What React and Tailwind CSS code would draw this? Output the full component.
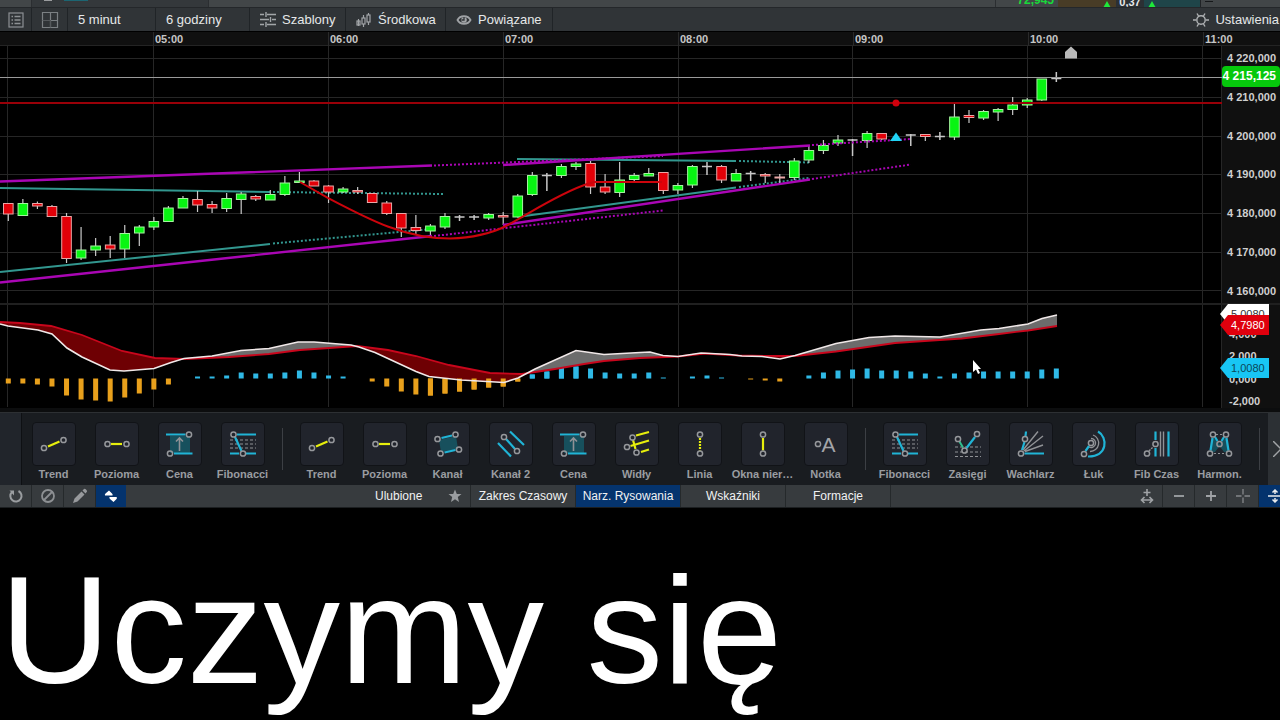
import React from "react";

const STEP = 14.556;
const FIRST = 8.3;
const xAt = (i) => FIRST + STEP * i;

// [kind, body top, body bottom, high, low]; kinds: g = up, r = down, d = doji
const candles = [
  ["r", 203.5, 214, 203, 221], ["g", 203.5, 215.5, 199, 216], ["r", 203.5, 206, 201.5, 209],
  ["r", 206.5, 216.5, 205, 217], ["r", 216.5, 258.5, 213, 263], ["g", 250, 258, 227, 260],
  ["g", 246, 250, 238, 256], ["r", 245, 249, 236, 258], ["g", 233.5, 249, 225, 258],
  ["g", 227, 233, 225, 246], ["g", 221.5, 227, 217, 230], ["g", 208, 221.5, 206, 222],
  ["g", 198.5, 208, 196, 208], ["r", 199.5, 205, 191, 212], ["r", 204.5, 208, 201, 213],
  ["g", 198.5, 208.5, 193, 212], ["g", 194, 199.5, 192, 214], ["r", 196.5, 199, 195, 201],
  ["g", 194.5, 200, 190, 200], ["g", 183, 194.5, 176, 196], ["g", 181, 182.5, 172, 183],
  ["r", 181, 186, 180, 186], ["r", 186, 192, 185, 203], ["g", 189, 192, 187, 193],
  ["r", 190.5, 192, 187, 194], ["r", 193.5, 202.5, 193, 203], ["r", 203, 213.5, 201, 215],
  ["r", 213.5, 228, 213, 237], ["r", 227.5, 230.5, 215, 235], ["g", 226, 231, 224, 236],
  ["g", 216.5, 227, 213, 229], ["d", 217, 217, 215, 221], ["d", 217, 217, 215, 220],
  ["g", 214.5, 218, 213, 220], ["r", 215.5, 217, 212, 225], ["g", 196, 217, 194, 217],
  ["g", 175.5, 194.5, 172, 196], ["d", 175.5, 175.5, 173, 191], ["g", 166.5, 175.5, 164, 178],
  ["g", 164, 166.5, 162, 170], ["r", 163.5, 187, 161, 194], ["r", 187, 192, 174, 194],
  ["g", 180, 192.5, 162, 197], ["g", 175.5, 179.5, 173, 182], ["g", 173.5, 176, 168, 176],
  ["r", 172.5, 190.5, 172, 194], ["g", 185.5, 190, 183, 194], ["g", 166.5, 185, 165, 188],
  ["d", 166.5, 166.5, 162, 175], ["r", 166.5, 180, 165, 183], ["g", 173.5, 181, 169, 181],
  ["d", 173.5, 173.5, 171, 181], ["r", 174.5, 176, 173, 183], ["r", 177, 178, 174, 183],
  ["g", 161, 177.5, 158, 180], ["g", 150.5, 160, 146, 163], ["g", 145.5, 150.5, 140, 154],
  ["g", 140, 143, 135, 146], ["d", 140, 140, 139, 156], ["g", 133.5, 140.5, 131, 148],
  ["r", 133.5, 139, 133, 140], null, ["d", 135, 135, 134, 146],
  ["r", 134.5, 136.5, 134, 141], ["d", 136.5, 136.5, 132, 140], ["g", 117, 137, 104, 140],
  ["r", 115.5, 117.5, 110, 123], ["g", 111.5, 118, 110, 120], ["g", 109.5, 112, 108, 121],
  ["g", 105, 109.5, 97, 115], ["g", 100, 105, 98, 108], ["g", 79, 100, 79, 101],
  ["d", 78.5, 78.5, 72, 82],
];

const histogram = [
  -5, -5, -6, -8, -17, -21, -22, -23, -19, -15, -11, -6, 0, 2, 2, 3, 6, 5, 5, 6, 8, 6, 3, 2, 0,
  -3, -8, -13, -16, -17, -15, -13, -11, -9, -8, -3, 4, 7, 11, 12, 10, 6, 5, 5, 6, 1, 0, 2, 3, 1,
  0, -1, -2, -3, 0, 3, 6, 8, 9, 10, 8, 8, 7, 5, 2, 5, 6, 7, 7, 7, 7, 9, 10,
];

const signal =
  "0,322 20,323 51,326 82,335 122,351 155,358 184,359 229,357 269,354 300,350 329,348 357,346 388,350 416,356 449,365 490,373 522,374 555,369 584,364 604,361 640,358 678,356.5 705,353.5 738,355.5 779,356 795,356 836,351.5 895,343 962,338.5 999,334 1028,330.5 1057,326";
const macd =
  "0,324 8,326 38,330 52,334 67,348 82,357 110,370 124,371 154,368.5 171,362.5 184,358.5 212,356 241,350.5 269,348.5 298,342 314,342 351,345 359,347 375,352.5 416,371.5 429,376.5 461,380 504,382.5 518,378 535,369 576,350.5 604,354.5 640,352.5 650,352 663,355.5 678,356.5 701,353 730,354.5 742,356 762,356.5 780,359 795,355.5 836,343.5 869,337.5 895,336 940,337 981,330 999,328.5 1028,324 1042,318.5 1057,315";
const reversed = (pts) => pts.split(" ").reverse().join(" ");

function Candle({ data, x }) {
  if (!data) return null;
  const [kind, top, bottom, high, low] = data;
  if (kind === "d")
    return (
      <path d={`M${x} ${high}V${low}M${x - 5} ${top}H${x + 5}`} stroke="#c8c8c8" strokeWidth="1.5" fill="none" />
    );
  return (
    <g>
      <path d={`M${x} ${high}V${low}`} stroke="#c9c9c9" strokeWidth="1.2" />
      <rect
        x={x - 4.8}
        y={top}
        width="9.6"
        height={bottom - top}
        fill={kind === "g" ? "#08f512" : "#e20008"}
        stroke={kind === "g" ? "#a5f2a0" : "#e8a6a6"}
        strokeWidth="1"
      />
    </g>
  );
}

function Chart() {
  return (
    <svg viewBox="0 46 1222 362" className="block h-auto w-full" role="img" aria-label="Wykres">
      <defs>
        <clipPath id="below"><polygon points={`${signal} 1057,408 0,408`} /></clipPath>
        <clipPath id="above"><polygon points={`${signal} 1057,300 0,300`} /></clipPath>
      </defs>
      <rect y="46" width="1222" height="362" fill="#000" />
      <g stroke="#262626" strokeWidth="1">
        {[7.5, 153.5, 328.5, 503.5, 678.5, 852.5, 1027.5, 1202.5].map((x) => (
          <path key={x} d={`M${x} 46V407`} />
        ))}
        {[58.5, 97.5, 136.5, 174.5, 213.5, 252.5, 290.5].map((y) => (
          <path key={y} d={`M0 ${y}H1222`} />
        ))}
        <path d="M1221.5 46V408" />
      </g>
      <path d="M0 304H1222" stroke="#202020" strokeWidth="2" />

      <g fill="none" stroke="#32978f" strokeWidth="2">
        <path d="M0 188L270 192M0 272L270 244M517 159L736 161M517 217L736 187.5" />
        <path d="M273 192L443 194M273 243.5L432 229M739 161L809 162.5M739 187L809 178" strokeDasharray="2 2" />
      </g>
      {candles.map((c, i) => (
        <Candle key={i} data={c} x={xAt(i)} />
      ))}
      <g fill="none" stroke="#a906b4" strokeWidth="2.4">
        <path d="M0 181.500L432 165.500M0 282.500L432 236M503 165L810 145.500M503 225L810 179.500" />
        <path d="M434 165.500L663 156M434 236L663 210.500M812 145L911 139M812 179L911 164.500" strokeWidth="2" strokeDasharray="2 2" />
      </g>
      <path
        d="M300 182L330 199C370 220 405 238.500 450 238.500C480 237.500 495 231.500 505 226.500C530 213 560 193 587 184L594 182H662"
        fill="none"
        stroke="#cc040c"
        strokeWidth="2"
      />
      <path d="M0 103H1222" stroke="#990008" strokeWidth="2" />
      <circle cx="896" cy="103" r="3.500" fill="#d0000c" />
      <path d="M0 77.500H1222" stroke="#9a9a9a" strokeWidth="1.200" />
      <path d="M890 141L896 132.500L902 141Z" fill="#21d3f5" />
      <path d="M1065 58.500V52L1071 46.500L1077 52V58.500Z" fill="#b9b9b9" />

      {histogram.map((v, i) =>
        v === 0 ? null : (
          <rect
            key={i}
            x={xAt(i) - 2.5}
            y={v > 0 ? 378.5 - v : 378.5}
            width="5"
            height={Math.abs(v)}
            fill={v > 0 ? "#2fb9e6" : "#e8a01c"}
          />
        )
      )}
      <polygon points={`${macd} ${reversed(signal)}`} fill="#6e0003" clipPath="url(#below)" />
      <polygon points={`${macd} ${reversed(signal)}`} fill="#6c6c6c" clipPath="url(#above)" />
      <g fill="#2fb9e6">
        {[36, 37, 38, 39].map((i) => (
          <rect key={i} x={xAt(i) - 2.5} y={378.5 - histogram[i]} width="5" height={histogram[i]} />
        ))}
      </g>
      <g fill="#e8a01c">
        {[29, 30, 31, 32, 33, 34, 35].map((i) => (
          <rect key={i} x={xAt(i) - 2.5} y="378.500" width="5" height={-histogram[i]} />
        ))}
      </g>
      <polyline points={signal} fill="none" stroke="#c8061c" strokeWidth="1.800" />
      <polyline points={macd} fill="none" stroke="#f0e8e8" strokeWidth="1.600" />
      <path d="M973 360V372L976 369.500L978 374L980 373L978 369H981Z" fill="#fff" />
    </svg>
  );
}

const C = ({ x, y }) => <circle cx={x} cy={y} r="2.600" stroke="#96989c" strokeWidth="1.500" fill="none" />;
const Cyan = ({ d }) => <path d={d} stroke="#20b4d6" strokeWidth="2.200" fill="none" />;
const Yel = ({ d, dash }) => <path d={d} stroke="#e6ee0c" strokeWidth="2.200" fill="none" strokeDasharray={dash} />;
const Gray = ({ d, dash, w = 1 }) => <path d={d} stroke="#909296" strokeWidth={w} fill="none" strokeDasharray={dash} />;

const drawings = {
  trend: (<><Yel d="M-6 2.500L5.500 -2.500" /><C x={-10} y={4} /><C x={9.5} y={-4} /></>),
  level: (<><Yel d="M-6 0H5" /><C x={-9.5} y={0} /><C x={9.5} y={0} /></>),
  price: (
    <>
      <rect x="-10" y="-8" width="20" height="17" fill="#17505d" />
      <Cyan d="M-14 -9.500H5.500M-6 9.500H12.500" />
      <C x={9} y={-9.5} /><C x={-10} y={9.5} />
      <Gray w={1.6} d="M-.5 7V-6M-4 -2.500L-.5 -6L3 -2.500" />
    </>
  ),
  fib: (
    <>
      <Gray d="M-13 -4H13M-13 0H13M-13 4H13" dash="3 2" />
      <Cyan d="M-6 -9.500H13M-8 -7L-1.500 7M-13 9.500H-4M3 9.500H13" />
      <C x={-9.5} y={-9.5} /><C x={0} y={9.5} />
    </>
  ),
  channel: (
    <>
      <path d="M-9 -4L8 -8L10 5L-7 8Z" fill="#17505d" />
      <Cyan d="M-6.500 -6L4 -8.500M-3.500 8.500L7.500 6" />
      <C x={-10.5} y={-5} /><C x={7.5} y={-9.5} /><C x={-7.5} y={9.5} /><C x={11} y={5.5} />
    </>
  ),
  channel2: (
    <>
      <Cyan d="M-13 -1L0 12.500M-1 -12.500L13 1M-5 -5L4 5" />
      <C x={-7} y={-7} /><C x={6} y={7} />
    </>
  ),
  fork: (
    <>
      <Yel d="M-1 -8.500L12 -12M-6.500 2L12 -3.500M4 8L12 5.500M-4 -4L-1.500 5" />
      <C x={-4.5} y={-6.5} /><C x={-10} y={3} /><C x={-0.5} y={8.5} />
    </>
  ),
  line: (<><Yel d="M0 -6V6.500" dash="2 1" /><C x={0} y={-9.5} /><C x={0} y={9.5} /></>),
  window: (<><Yel d="M0 -6V6.500" /><C x={0} y={-9.5} /><C x={0} y={9.5} /></>),
  note: (
    <>
      <C x={-8} y={0} />
      <text x="2.500" y="8" textAnchor="middle" fontSize="21" fill="#a3a5a9" fontFamily="Liberation Sans, Arial, sans-serif">A</text>
    </>
  ),
  ranges: (
    <>
      <Gray d="M-13 3H13M-13 8H13M-13 12.500H13" dash="3 2" />
      <Cyan d="M-1.500 4L7 -7" />
      <path d="M-8.500 -2.500L-5 3.500" stroke="#2fbf8f" strokeWidth="2" />
      <C x={-10} y={-5} /><C x={9} y={-10} /><C x={-3.5} y={6.5} />
    </>
  ),
  fan: (
    <>
      <Gray w={1.4} d="M-8 6L7 -12.500M-7 7L12 -8M-6 7.500L12 1" />
      <Cyan d="M-5 -12.500L-5.500 -8M-6.500 -2L-9 6M-6.500 9.500H13" />
      <C x={-6} y={-5} /><C x={-10} y={9.5} />
    </>
  ),
  arc: (
    <>
      <Gray w={1.3} d="M-3 -5.500A4.500 4.500 0 1 1 -5 3M-1 -9A8.500 8.500 0 0 1 -4 7.500" />
      <Cyan d="M4 -12.500C14 -7 14 13 -6 12.500M-5 2L-8.500 7" />
      <C x={-3} y={-1} /><C x={-10} y={10} />
    </>
  ),
  fibtime: (
    <>
      <Gray w={1.4} d="M3.500 -12.500V12.500M6.500 -12.500V12.500" />
      <Cyan d="M-1.500 -12.500V-4M-1.500 4V12.500M11.500 -12.500V12.500" />
      <Gray w={1.4} d="M-8 7L-4 3" dash="2 1" />
      <C x={-1.5} y={0} /><C x={-10} y={9.5} />
    </>
  ),
  harmonic: (
    <>
      <path d="M-7 -7L-.5 0L6 -7L9 8H4L-.5 2L-5 8H-10Z" fill="#17505d" />
      <Gray d="M-4 -9.500H3M-6 9.500H6" dash="2 2" />
      <Cyan d="M-7.500 -6L-9.500 6.500M6.500 -6L8.500 6.500M-5 -7L-2.500 -3M4 -7L1.500 -3" />
      <C x={-7} y={-9.5} /><C x={6} y={-9.5} /><C x={-0.5} y={0} /><C x={-10} y={9.5} /><C x={9} y={9.5} />
    </>
  ),
};

const toolGroups = [
  [["trend", "Trend"], ["level", "Pozioma"], ["price", "Cena"], ["fib", "Fibonacci"]],
  [
    ["trend", "Trend"], ["level", "Pozioma"], ["channel", "Kanał"], ["channel2", "Kanał 2"], ["price", "Cena"],
    ["fork", "Widły"], ["line", "Linia"], ["window", "Okna nier…"], ["note", "Notka"],
  ],
  [
    ["fib", "Fibonacci"], ["ranges", "Zasięgi"], ["fan", "Wachlarz"], ["arc", "Łuk"], ["fibtime", "Fib Czas"],
    ["harmonic", "Harmon."],
  ],
];

function Tool({ icon, label }) {
  return (
    <button className="flex w-[63px] shrink-0 flex-col items-center gap-[2px] whitespace-nowrap">
      <span className="flex h-11 w-11 items-center justify-center rounded border border-[#111317] bg-[#21242c]">
        <svg viewBox="-15 -15 30 30" className="h-[30px] w-[30px]">{drawings[icon]}</svg>
      </span>
      <span className="text-[11px] leading-3 font-bold text-[#9a9ca1]">{label}</span>
    </button>
  );
}

function TopStrip() {
  return (
    <div className="flex h-2 items-start overflow-hidden border-b border-[#24272a] bg-[#424648]">
      <div className="h-2 w-8 shrink-0 border-r border-[#2b2e31]" />
      <div className="flex h-2 w-44 shrink-0 gap-3 bg-[#34383b] pl-3">
        <span className="h-px w-2 bg-[#9a9c9e]" />
        <span className="h-px w-6 bg-[#1c6572]" />
      </div>
      <div className="h-2 flex-1 border-l border-[#2b2e31]" />
      <div className="flex h-2 shrink-0 items-end border-l border-[#2b2e31] text-[12px] leading-3 font-bold">
        <span className="w-[62px] pr-1 pb-[2px] text-right text-[#19d83a]">72,945</span>
        <span className="flex h-2 w-[58px] items-center justify-end bg-[#483c26] pr-[5px]">
          <svg viewBox="0 0 8 7" className="h-[7px] w-2"><path d="M4 0L8 7H0Z" fill="#1ee83a" /></svg>
        </span>
        <span className="h-2 w-7 bg-[#2b3034] text-center text-[11px] leading-1 text-[#e6e8ea]">0,37</span>
        <span className="flex h-2 w-14 items-center bg-[#1f4549] pl-1">
          <svg viewBox="0 0 8 7" className="h-[7px] w-2"><path d="M4 0L8 7H0Z" fill="#1ee83a" /></svg>
        </span>
      </div>
      <div className="h-2 w-20 shrink-0 border-l border-[#202326] pt-px pl-1"><div className="h-px w-2 bg-[#16181a]" /></div>
    </div>
  );
}

const ListIcon = () => (
  <svg viewBox="0 0 16 16" className="h-4 w-4" fill="none" stroke="#8d9194" strokeWidth="1.200">
    <rect x="1" y="1" width="14" height="14" />
    <path d="M3.500 4.500H5M3.500 8H5M3.500 11.500H5M6.500 4.500H12.500M6.500 8H12.500M6.500 11.500H12.500" strokeWidth="1.500" />
  </svg>
);
const GridIcon = () => (
  <svg viewBox="0 0 18 18" className="h-[18px] w-[18px]" fill="none" stroke="#7b8083" strokeWidth="1.200">
    <path d="M1.500 1.500H16.500V16.500H1.500ZM9.500 1.500V16.500M1.500 9.500H16.500" />
    <path d="M1.500 9.500H9.500V16.500" stroke="#55595c" />
  </svg>
);
const SlidersIcon = () => (
  <svg viewBox="0 0 16 16" className="h-4 w-4" fill="none" stroke="#a2a6a9" strokeWidth="1.400">
    <path d="M0 2.500H4M7 2.500H16M0 7.500H9M12 7.500H16M0 12.500H4M7 12.500H16M6 0V5M10.500 5V10M6 10V15" />
  </svg>
);
const CandlesIcon = () => (
  <svg viewBox="0 0 16 16" className="h-4 w-4" fill="none" stroke="#a2a6a9" strokeWidth="1.200">
    <path d="M2.500 7V14M7.500 3V15M12.500 1V13" />
    <rect x="1" y="9" width="3" height="4" /><rect x="6" y="6" width="3" height="6" fill="#303437" /><rect x="11" y="3" width="3" height="7" fill="#303437" />
  </svg>
);
const EyeIcon = () => (
  <svg viewBox="0 0 16 12" className="h-3 w-4">
    <path d="M1.500 6C4 1 12 1 14.500 6C12 11 4 11 1.500 6Z" fill="none" stroke="#a0a3a6" strokeWidth="1.800" />
    <circle cx="8" cy="6" r="2.800" fill="#a0a3a6" /><path d="M8 3V6H5.500" stroke="#303437" strokeWidth="1.300" fill="none" />
  </svg>
);
const SunIcon = () => (
  <svg viewBox="0 0 16 16" className="h-4 w-4" fill="none" stroke="#b0b3b5" strokeWidth="1.400">
    <circle cx="8" cy="8" r="4.200" />
    <path d="M0 8H3M13 8H16M4 1.500L5.500 4M12 1.500L10.500 4M4 14.500L5.500 12M12 14.500L10.500 12" />
  </svg>
);

const sep = "border-r border-[#202427]";

function Toolbar() {
  return (
    <div className="flex h-6 items-stretch border-b border-black bg-[#303437] text-[13px] leading-4 text-[#e6e8e9]">
      <button aria-label="Lista" className={`flex w-8 items-center justify-center ${sep}`}><ListIcon /></button>
      <button aria-label="Układ" className={`flex w-9 items-center justify-center ${sep}`}><GridIcon /></button>
      <button className={`w-[88px] pl-[10px] text-left ${sep}`}>5 minut</button>
      <button className={`w-[94px] pl-[10px] text-left ${sep}`}>6 godziny</button>
      <button className={`flex w-24 items-center gap-[6px] pl-[10px] ${sep}`}><SlidersIcon />Szablony</button>
      <button className={`flex w-[100px] items-center gap-[6px] pl-[10px] ${sep}`}><CandlesIcon />Środkowa</button>
      <button className={`flex w-[107px] items-center gap-[6px] pl-[10px] ${sep}`}><EyeIcon />Powiązane</button>
      <button className="ml-auto flex items-center gap-[6px] pr-px"><SunIcon />Ustawienia</button>
    </div>
  );
}

function TimeAxis() {
  return (
    <div className="grid h-[14px] grid-cols-[153fr_repeat(6,175fr)_77fr] border-b border-[#242424] bg-[#101010] text-[11px] leading-[14px] font-bold text-[#c6c6c6]">
      <span />
      {["05:00", "06:00", "07:00", "08:00", "09:00", "10:00", "11:00"].map((t) => (
        <span key={t} className="border-l border-[#2a2a2a] pl-px">{t}</span>
      ))}
    </div>
  );
}

function Tag({ className, fill, children }) {
  return (
    <div className={`absolute -left-[2px] h-5 w-[49px] pl-[11px] text-[11px] leading-5 ${className}`}>
      <svg viewBox="0 0 49 20" className="absolute inset-0 h-5 w-[49px]"><path d="M0 10L8 0H49V20H8Z" fill={fill} /></svg>
      <span className="relative">{children}</span>
    </div>
  );
}

function PriceAxis() {
  return (
    <div className="relative w-[58px] shrink-0 bg-[#101010] text-[11px] leading-3 font-bold whitespace-nowrap text-[#cfcfcf]">
      <div className="flex h-[251px] flex-col justify-between pt-[6px] pr-1 text-right">
        {["4 220,000", "4 210,000", "4 200,000", "4 190,000", "4 180,000", "4 170,000", "4 160,000"].map((t) => (
          <span key={t}>{t}</span>
        ))}
      </div>
      <div className="mt-[6px] h-[2px] bg-[#202020]" />
      <div className="mt-[23px] flex h-[79px] flex-col justify-between pl-[7px]">
        {["4,000", "2,000", "0,000", "-2,000"].map((t) => (
          <span key={t}>{t}</span>
        ))}
      </div>
      <div className="absolute top-5 left-0 h-[21px] w-full rounded-sm bg-[#06c80c] pr-1 text-right text-[12px] leading-[21px] text-white">
        4 215,125
      </div>
      <Tag className="top-[258px] font-normal text-[#333]" fill="#ffffff">5,0080</Tag>
      <Tag className="top-[269px] font-normal text-white" fill="#e0000d">4,7980</Tag>
      <Tag className="top-[312px] font-normal text-[#0b4858]" fill="#18c6f4">1,0080</Tag>
    </div>
  );
}

function ToolPanel() {
  return (
    <div className="flex h-[73px] overflow-hidden border-t border-[#2d3033] bg-[#191c20]">
      <div className="w-[22px] shrink-0 border-r border-[#0e1013] bg-[#21252b]" />
      <div className="flex flex-1 pt-[9px]">
        {toolGroups.map((group, i) => (
          <React.Fragment key={i}>
            {group.map(([icon, label], j) => (
              <Tool key={j} icon={icon} label={label} />
            ))}
            <span className="flex w-4 shrink-0 justify-center pt-[6px]"><span className="h-[42px] w-px bg-[#3c3f44]" /></span>
          </React.Fragment>
        ))}
      </div>
      <button aria-label="Dalej" className="flex w-3 shrink-0 items-center justify-center bg-[#2c3034] pl-[6px]">
        <svg viewBox="0 0 8 16" className="h-4 w-2 shrink-0"><path d="M0 0L8 8L0 16" fill="none" stroke="#a0a3a6" strokeWidth="1.500" /></svg>
      </button>
    </div>
  );
}

function BottomBar() {
  const cell = "flex w-8 shrink-0 items-center justify-center border-r border-[#25292b]";
  const tab = "w-[105px] shrink-0 border-r border-[#25292b] text-center";
  return (
    <div className="flex h-[23px] items-stretch overflow-hidden border-b border-[#1c1f21] bg-[#373b3e] text-[12px] leading-[22px] text-[#f0f1f2]">
      <button aria-label="Odśwież" className={cell}>
        <svg viewBox="0 0 16 16" className="h-4 w-4" fill="none" stroke="#9a9da0" strokeWidth="2">
          <path d="M10.500 3A5.600 5.600 0 1 1 4 4" /><path d="M1.500 2.500H6V7.500Z" fill="#9a9da0" stroke="none" />
        </svg>
      </button>
      <button aria-label="Wyłącz" className={cell}>
        <svg viewBox="0 0 16 16" className="h-4 w-4" fill="none" stroke="#8d9093" strokeWidth="1.800">
          <circle cx="8" cy="8" r="6" /><path d="M4 12L12 4" />
        </svg>
      </button>
      <button aria-label="Rysuj" className={cell}>
        <svg viewBox="0 0 16 16" className="h-4 w-4" fill="#97999c">
          <path d="M1 15L2.500 10.500L9.500 3.500L12.500 6.500L5.500 13.500ZM10.500 2.500L12 1Q13 .5 14 1.500L14.800 2.500Q15.500 3.500 14.500 4.300L13.500 5.500Z" />
        </svg>
      </button>
      <button aria-label="Zwiń" className="flex w-[30px] shrink-0 items-center justify-center bg-[#04336d]">
        <svg viewBox="0 0 14 14" className="h-[14px] w-[14px]" fill="#fff">
          <path d="M1 6.500H8.500Q9 5.500 8 4.500L5 1.500L1.500 4.500Q.5 5.500 1 6.500ZM5.500 8H12.500Q13.500 9 12.500 10L9.500 13L6 10Q5 9 5.500 8Z" />
        </svg>
      </button>
      <div className="min-w-0 flex-[240]" />
      <div role="tablist" className="flex shrink-0">
        <button role="tab" className="flex w-[105px] items-center justify-between border-r border-[#25292b] pr-2 pl-[9px]">
          Ulubione
          <svg viewBox="0 0 14 14" className="h-[14px] w-[14px]"><path d="M7 .5L8.800 5H13.500L9.800 8L11 13L7 10.200L3 13L4.200 8L.5 5H5.200Z" fill="#9a9da0" /></svg>
        </button>
        <button role="tab" className={tab}>Zakres Czasowy</button>
        <button role="tab" aria-selected="true" className={`${tab} bg-[#05346e]`}>Narz. Rysowania</button>
        <button role="tab" className={tab}>Wskaźniki</button>
        <button role="tab" className={tab}>Formacje</button>
      </div>
      <div className="min-w-0 flex-[240]" />
      <div className="-mr-[11px] flex shrink-0">
        <button aria-label="Rozciągnij" className={cell}>
          <svg viewBox="0 0 14 16" className="h-4 w-[14px]" fill="none" stroke="#a0a3a6" strokeWidth="1.600">
            <path d="M7 1V8M3.500 4.500H10.500M2 12H12M4.500 9L1.500 12L4.500 15M9.500 9L12.500 12L9.500 15" />
          </svg>
        </button>
        <button aria-label="Pomniejsz" className={cell}>
          <svg viewBox="0 0 12 12" className="h-3 w-3"><path d="M1 6H11" stroke="#a0a3a6" strokeWidth="1.800" /></svg>
        </button>
        <button aria-label="Powiększ" className={cell}>
          <svg viewBox="0 0 12 12" className="h-3 w-3"><path d="M1 6H11M6 1V11" stroke="#a0a3a6" strokeWidth="1.800" /></svg>
        </button>
        <button aria-label="Celownik" className={cell}>
          <svg viewBox="0 0 14 14" className="h-[14px] w-[14px]"><path d="M0 7H5.500M8.500 7H14M7 0V5.500M7 8.500V14" stroke="#85888b" strokeWidth="1.300" /></svg>
        </button>
        <button aria-label="Dopasuj" className="flex w-8 shrink-0 items-center justify-center bg-[#04336d]">
          <svg viewBox="0 0 14 14" className="h-[14px] w-[14px]" fill="none" stroke="#e8eaec" strokeWidth="1.500">
            <path d="M0 7H14M7 1V5M7 9V13M4.500 3.500L7 1L9.500 3.500M4.500 10.500L7 13L9.500 10.500" />
          </svg>
        </button>
      </div>
    </div>
  );
}

export default function App() {
  return (
    <main className="min-h-screen overflow-hidden bg-black font-['Liberation_Sans',Arial,sans-serif]">
      <TopStrip />
      <Toolbar />
      <TimeAxis />
      <div className="flex items-stretch">
        <div className="min-w-0 flex-1"><Chart /></div>
        <PriceAxis />
      </div>
      <div className="h-1 bg-[#0c0d0e]" />
      <ToolPanel />
      <BottomBar />
      <h1 className="mt-[34px] text-[153px] leading-[176px] whitespace-nowrap text-white">Uczymy się</h1>
    </main>
  );
}
